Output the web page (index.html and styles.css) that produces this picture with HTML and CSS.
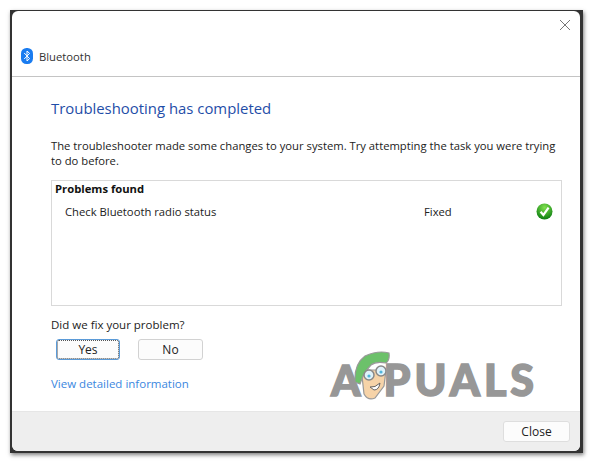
FILE: index.html
```html
<!DOCTYPE html>
<html lang="en">
<head>
  <meta charset="UTF-8">
  <meta name="viewport" content="width=device-width, initial-scale=1.0">
  <title>Bluetooth</title>
  <link rel="stylesheet" href="styles.css">
</head>
<body>

  <div class="window">
    <div class="window-inner">
      <!-- Title area -->
      <div class="top-bar">
        <svg class="close-x" width="12" height="12" viewBox="0 0 12 12">
          <path d="M1 1 L11 11 M11 1 L1 11" stroke="#777" stroke-width="1" fill="none"/>
        </svg>
      </div>
      <div class="title-row">
        <svg class="bt-icon" width="12" height="16" viewBox="0 0 12 16">
          <rect x="0" y="0" width="12" height="16" rx="5.5" fill="#1a7cf0"/>
          <path d="M3.2 5 L8.6 10.6 L6 13 L6 3 L8.6 5.4 L3.2 11" stroke="#fff" stroke-width="1" fill="none"/>
        </svg>
        <span>Bluetooth</span>
      </div>

      <div class="content">
        <h1>Troubleshooting has completed</h1>
        <p class="desc">The troubleshooter made some changes to your system. Try attempting the task you were trying to do before.</p>

        <div class="results">
          <div class="results-head">Problems found</div>
          <div class="result-row">
            <span class="result-name">Check Bluetooth radio status</span>
            <span class="result-status">Fixed</span>
            <svg class="check" width="17" height="17" viewBox="0 0 17 17">
              <defs>
                <radialGradient id="okGrad" cx="50%" cy="25%" r="75%">
                  <stop offset="0" stop-color="#7fe04e"/>
                  <stop offset="1" stop-color="#0b7d10"/>
                </radialGradient>
              </defs>
              <circle cx="8.5" cy="8.5" r="8" fill="url(#okGrad)"/>
              <path d="M4.6 8.8 L7.4 12 L12.6 4.6" stroke="#fff" stroke-width="2.2" fill="none"/>
            </svg>
          </div>
        </div>

        <div class="question">Did we fix your problem?</div>
        <div class="answers">
          <button class="answer answer-focus">Yes</button>
          <button class="answer">No</button>
        </div>
        <a class="details" href="#">View detailed information</a>
      </div>

      <!-- Watermark -->
      <div class="watermark">
        <span class="wm-text">A</span>
        <svg class="mascot" width="42" height="52" viewBox="0 0 42 52">
          <path d="M10 26 L12 44 Q16 51 23 48 L32 36 L34 20 L12 20 Z" fill="#f6d3a8" stroke="#999" stroke-width="1.2"/>
          <path d="M3 32 Q2 14 13 6 Q26 0 37 3 Q38 10 34 13 Q24 11 19 15 Q14 20 11 26 L8 34 Z" fill="#6cc16a" stroke="#999" stroke-width="1.2"/>
          <circle cx="17" cy="25" r="5" fill="#dff2fa" stroke="#888" stroke-width="1.5"/>
          <circle cx="29" cy="21" r="5" fill="#dff2fa" stroke="#888" stroke-width="1.5"/>
          <circle cx="17" cy="26" r="1.6" fill="#4fb4dc"/>
          <circle cx="29" cy="22" r="1.6" fill="#4fb4dc"/>
          <path d="M18 37 Q23 38 28 33 Q27 40 22 40 Z" fill="#fff" stroke="#666" stroke-width="1"/>
        </svg>
        <span class="wm-text wm-rest">PUALS</span>
      </div>

      <div class="footer">
        <button class="close-btn">Close</button>
      </div>
    </div>
  </div>

</body>
</html>
```

FILE: styles.css
```css
/* Page */
html, body {
  margin: 0;
  padding: 0;
  background: #fff;
  overflow: hidden;
  font-family: "Open Sans", "Noto Sans", Arial, sans-serif;
}

body {
  height: 463px;
  padding: 10px 0 0 10px;
  box-sizing: border-box;
}

/* Dialog: the dark frame shows around the rounded white inner part */
.window {
  width: 573px;
  height: 443px;
  padding: 1px 3px 2px 2px;
  box-sizing: border-box;
  background: #333;
  box-shadow: 1px 2px 4px rgba(0, 0, 0, 0.5);
  color: #222;
  font-size: 11.25px;
}

.window-inner {
  position: relative;
  display: flex;
  flex-direction: column;
  height: 100%;
  background: #fff;
  border-radius: 6px;
  overflow: hidden;
}

.top-bar {
  display: flex;
  justify-content: flex-end;
  height: 30px;
  padding: 8px 9px 0 0;
  box-sizing: border-box;
}

.title-row {
  display: flex;
  align-items: center;
  gap: 6px;
  height: 18px;
  padding: 6px 0 11px 9px;
  border-bottom: 1px solid #c4c4c4;
  color: #333;
}

.content {
  flex: 1;
  padding: 21px 18px 0 39px;
}

h1 {
  margin: 0;
  font-size: 14.9px;
  font-weight: 400;
  line-height: 20px;
  color: #1f4ea8;
}

.desc {
  margin: 20px 0 0;
  line-height: 15px;
}

.results {
  height: 126px;
  margin-top: 12px;
  box-sizing: border-box;
  border: 1px solid #d9d9d9;
  padding: 0 3px;
}

.results-head {
  font-weight: 700;
  line-height: 16px;
  color: #111;
}

.result-row {
  display: flex;
  align-items: center;
  height: 18px;
  margin-top: 5px;
  padding-left: 10px;
}

.result-name {
  width: 359px;
}

.result-status {
  width: 112px;
}

.question {
  margin-top: 11px;
  font-size: 11.5px;
  line-height: 16px;
}

.answers {
  display: flex;
  gap: 18px;
  margin: 6px 0 0 5px;
}

button {
  font-family: inherit;
  font-size: 12px;
  color: #222;
  background: #fcfcfc;
  border: 1px solid #d2d2d2;
  border-radius: 3px;
  padding: 0;
}

.answer {
  width: 65px;
  height: 21px;
}

.answer-focus {
  width: 64px;
  border: 1px solid #5b9bd8;
  outline: 1px dotted #555;
  outline-offset: -2px;
}

.details {
  display: block;
  margin-top: 16px;
  font-size: 11.5px;
  line-height: 16px;
  color: #3b87e0;
  text-decoration: none;
}

/* Watermark over the dialog */
.watermark {
  position: absolute;
  left: 319px;
  top: 338px;
  display: flex;
  align-items: flex-end;
  height: 54px;
  font-family: "Lato", "Open Sans", sans-serif;
  font-size: 42px;
  font-weight: 900;
  line-height: 46px;
  color: #979797;
}

.wm-text {
  -webkit-text-stroke: 1.5px #979797;
}

.wm-rest {
  font-size: 43px;
  letter-spacing: 4px;
}

.mascot {
  margin: 0 -11px 1px -8px;
}

.footer {
  display: flex;
  align-items: center;
  justify-content: flex-end;
  height: 40px;
  padding-right: 10px;
  background: #eee;
  border-top: 1px solid #e6e6e6;
  box-sizing: border-box;
}

.close-btn {
  width: 67px;
  height: 21px;
  border-color: #dedede;
}
```
